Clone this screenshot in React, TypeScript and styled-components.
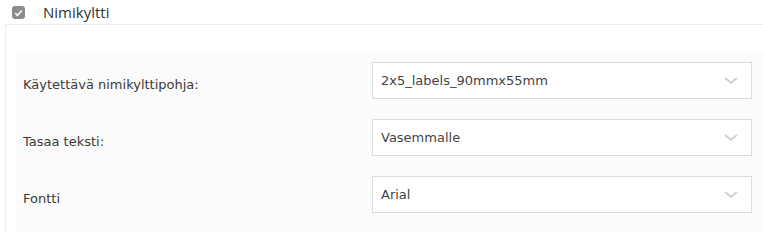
import React from 'react';
import styled, { createGlobalStyle } from 'styled-components';

// Global
const GlobalStyle = createGlobalStyle`
  html, body {
    margin: 0;
    padding: 0;
    background: #ffffff;
  }
  body {
    font-family: 'DejaVu Sans', Verdana, sans-serif;
  }
`;

// Styled Components
const Section = styled.section`
  width: 763px;
`;

const SectionHeader = styled.label`
  display: flex;
  align-items: center;
  height: 24px;
  padding-left: 12px;
  gap: 18px;
  box-sizing: border-box;
`;

const CheckBox = styled.span`
  width: 13px;
  height: 13px;
  border-radius: 3px;
  background: #8c8c8c;
  display: flex;
  align-items: center;
  justify-content: center;
  margin-top: 1px;
`;

const SectionTitle = styled.span`
  font-family: 'Open Sans', 'Noto Sans', sans-serif;
  font-size: 15px;
  color: #333333;
  line-height: 20px;
`;

const Frame = styled.div`
  margin-left: 5px;
  border-top: 1px solid #ececec;
  border-left: 1px solid #ececec;
  padding: 28px 0 0 10px;
`;

const Panel = styled.div`
  background: #fbfbfb;
  padding: 9px 11px 20px 7px;
  display: flex;
  flex-direction: column;
  gap: 20px;
`;

const Row = styled.div`
  display: grid;
  grid-template-columns: 349px 1fr;
  align-items: center;
`;

const Label = styled.span`
  font-size: 13px;
  color: #3a3a3a;
  padding-top: 8px;
`;

const Select = styled.div`
  height: 37px;
  box-sizing: border-box;
  border: 1px solid #dcdcdc;
  background: #ffffff;
  display: flex;
  align-items: center;
  justify-content: space-between;
  padding: 0 13px 0 8px;
  font-size: 13px;
  color: #444444;
`;

const Chevron = () => (
  <svg width="14" height="7" viewBox="0 0 14 7">
    <path d="M1 1 L7 5.8 L13 1" fill="none" stroke="#cfcfcf" strokeWidth="1.8" />
  </svg>
);

const fields = [
  { label: 'Käytettävä nimikylttipohja:', value: '2x5_labels_90mmx55mm' },
  { label: 'Tasaa teksti:', value: 'Vasemmalle' },
  { label: 'Fontti', value: 'Arial' },
];

// Component
const App: React.FC = () => (
  <>
    <GlobalStyle />
    <Section>
      <SectionHeader>
        <CheckBox>
          <svg width="9" height="8" viewBox="0 0 9 8">
            <path d="M1.2 4.2 L3.5 6.4 L7.8 1.4" fill="none" stroke="#ffffff" strokeWidth="1.6" />
          </svg>
        </CheckBox>
        <SectionTitle>Nimikyltti</SectionTitle>
      </SectionHeader>
      <Frame>
        <Panel>
          {fields.map((f) => (
            <Row key={f.label}>
              <Label>{f.label}</Label>
              <Select>
                <span>{f.value}</span>
                <Chevron />
              </Select>
            </Row>
          ))}
        </Panel>
      </Frame>
    </Section>
  </>
);

export default App;
